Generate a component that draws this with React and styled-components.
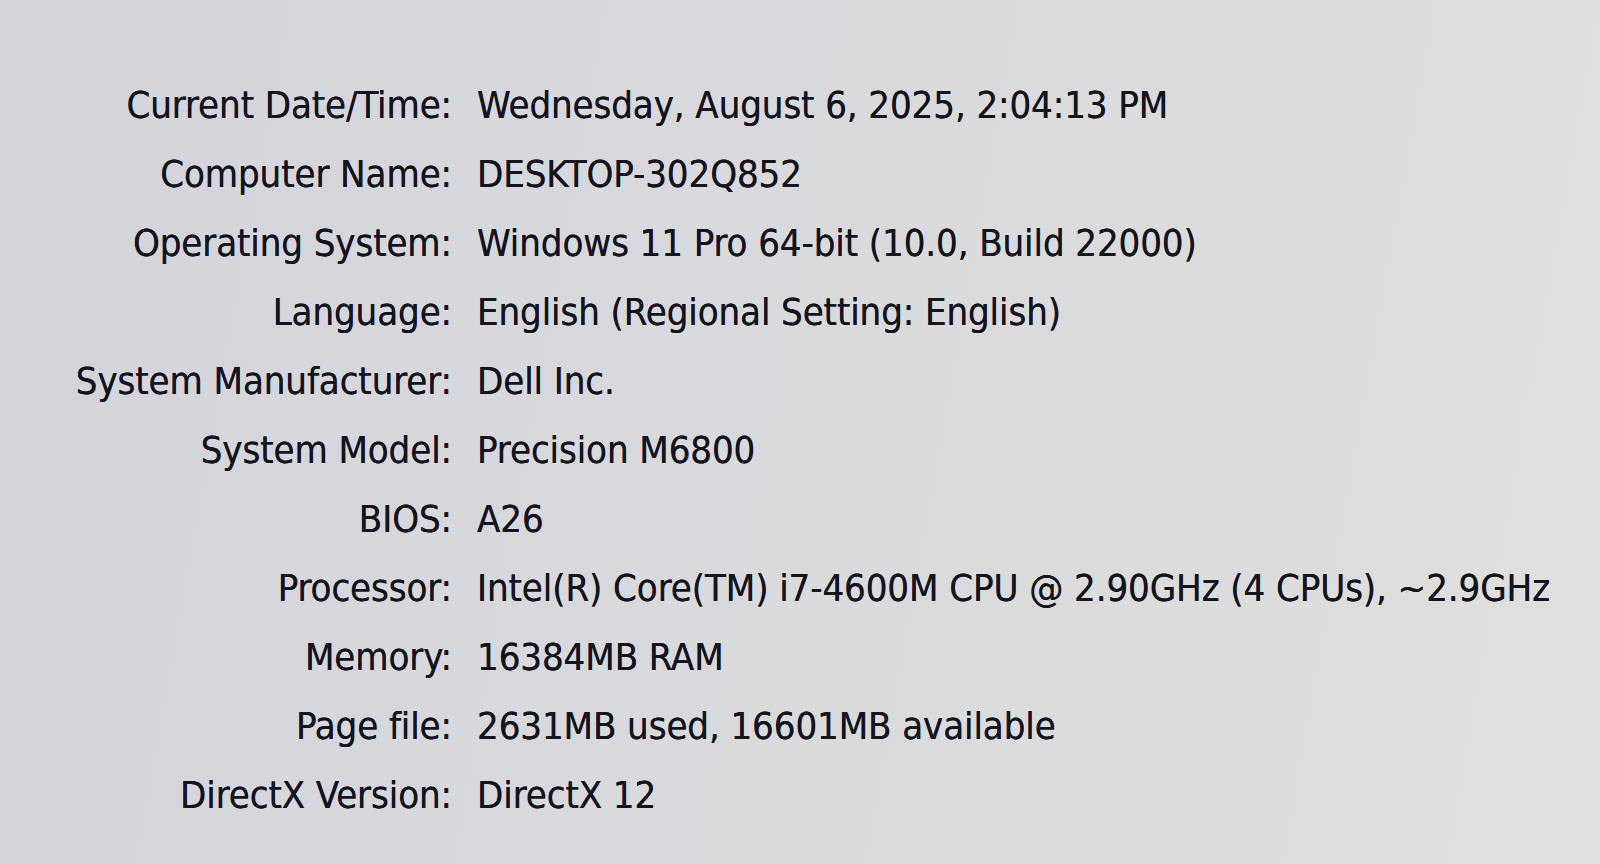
import React from "react";
import styled, { createGlobalStyle } from "styled-components";

const rows = [
  ["Current Date/Time:", "Wednesday, August 6, 2025, 2:04:13 PM"],
  ["Computer Name:", "DESKTOP-302Q852"],
  ["Operating System:", "Windows 11 Pro 64-bit (10.0, Build 22000)"],
  ["Language:", "English (Regional Setting: English)"],
  ["System Manufacturer:", "Dell Inc."],
  ["System Model:", "Precision M6800"],
  ["BIOS:", "A26"],
  ["Processor:", "Intel(R) Core(TM) i7-4600M CPU @ 2.90GHz (4 CPUs), ~2.9GHz"],
  ["Memory:", "16384MB RAM"],
  ["Page file:", "2631MB used, 16601MB available"],
  ["DirectX Version:", "DirectX 12"],
];

const GlobalStyle = createGlobalStyle`
  html, body {
    margin: 0;
    padding: 0;
    height: 100%;
    overflow: hidden;
  }
  #root {
    height: 100%;
  }
`;

const Screen = styled.div`
  width: 1600px;
  height: 864px;
  box-sizing: border-box;
  padding-top: 70px;
  background: linear-gradient(100deg, #d2d4da 0%, #d8d9dd 40%, #dcdcdc 75%, #e0dfdd 100%);
  font-family: "DejaVu Sans Condensed", "DejaVu Sans", Tahoma, sans-serif;
  color: #14141e;
`;

const InfoGrid = styled.div`
  display: grid;
  grid-template-columns: 452px 1fr;
  grid-auto-rows: 69px;
  column-gap: 25px;
  align-items: center;
`;

const Label = styled.div`
  text-align: right;
  font-size: 38px;
  white-space: nowrap;
  letter-spacing: -0.1px;
  text-shadow: 0 0 0.6px #14141e;
`;

const Value = styled.div`
  font-size: 38px;
  white-space: nowrap;
  letter-spacing: -0.1px;
  text-shadow: 0 0 0.6px #14141e;
`;

export default function App() {
  return (
    <>
      <GlobalStyle />
      <Screen>
        <InfoGrid>
          {rows.map(([label, value]) => (
            <React.Fragment key={label}>
              <Label>{label}</Label>
              <Value>{value}</Value>
            </React.Fragment>
          ))}
        </InfoGrid>
      </Screen>
    </>
  );
}
